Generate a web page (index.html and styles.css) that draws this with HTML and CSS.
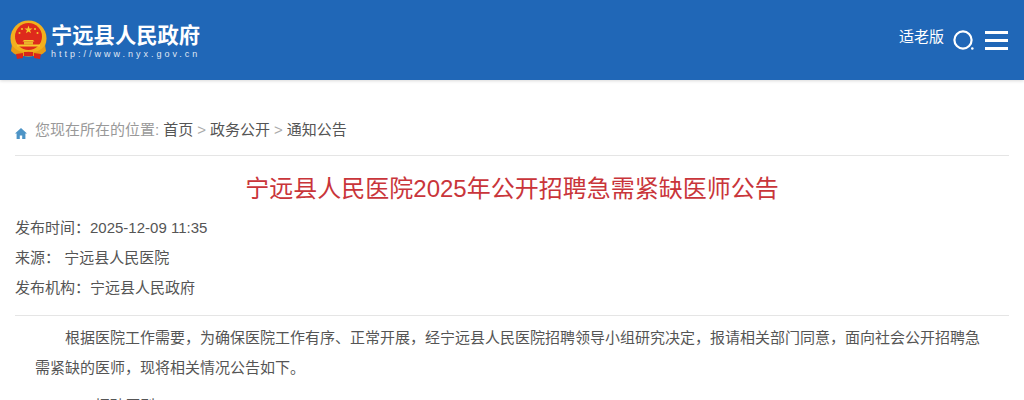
FILE: index.html
```html
<!DOCTYPE html>
<html lang="zh-CN">
<head>
    <meta charset="UTF-8">
    <title>宁远县人民政府</title>
    <link rel="stylesheet" href="styles.css">
</head>
<body>

<div class="header">
    <div class="logo">
        <svg class="emblem" width="38" height="40" viewBox="0 0 38 40">
            <circle cx="18.5" cy="18.5" r="18" fill="#f2b01e"/>
            <circle cx="18.5" cy="16.5" r="13.5" fill="#de2a1c"/>
            <polygon points="18.5,5.5 19.5,8.4 22.6,8.4 20.1,10.2 21,13.2 18.5,11.4 16,13.2 16.9,10.2 14.4,8.4 17.5,8.4" fill="#f6c92c"/>
            <circle cx="12" cy="9" r="1" fill="#f6c92c"/>
            <circle cx="25" cy="9" r="1" fill="#f6c92c"/>
            <circle cx="9.5" cy="13" r="1" fill="#f6c92c"/>
            <circle cx="27.5" cy="13" r="1" fill="#f6c92c"/>
            <polygon points="14,20 23,20 24.5,21.5 12.5,21.5" fill="#f6c92c"/>
            <rect x="14" y="21.5" width="9" height="3" fill="#e8b32a"/>
            <rect x="7" y="24.5" width="23" height="2" fill="#f6c92c"/>
            <path d="M2 25 C7 32 13 33 18.5 31 C24 33 30 32 35 25 L36 31 C30 37 24 37 18.5 35 C13 37 7 37 1 31 Z" fill="#e89c16"/>
            <path d="M6 34 L13 33 L13 38 L7 39 Z M31 34 L24 33 L24 38 L30 39 Z" fill="#d8261a"/>
            <rect x="14" y="32" width="9" height="4" fill="#d8261a"/>
        </svg>
        <div class="logo-text">
            <div class="logo-name">宁远县人民政府</div>
            <div class="logo-url">http://www.nyx.gov.cn</div>
        </div>
    </div>

    <div class="tools">
        <span class="elder">适老版</span>
        <svg class="icon-search" width="22" height="22" viewBox="0 0 22 22">
            <circle cx="10" cy="11" r="8.6" fill="none" stroke="#fff" stroke-width="2.2"/>
            <circle cx="19.3" cy="19.5" r="1.3" fill="#fff"/>
        </svg>
        <div class="icon-menu">
            <span></span>
            <span></span>
            <span></span>
        </div>
    </div>
</div>

<div class="main">
    <div class="crumb">
        <svg class="icon-home" width="12" height="11" viewBox="0 0 12 11">
            <path d="M6 0 L12 5.6 L10.4 5.6 L10.4 11 L7.2 11 L7.2 7.4 L4.8 7.4 L4.8 11 L1.6 11 L1.6 5.6 L0 5.6 Z" fill="#4d94c6"/>
        </svg>
        <span class="crumb-label">您现在所在的位置:</span>
        <a>首页</a>
        <span class="crumb-sep">&gt;</span>
        <a>政务公开</a>
        <span class="crumb-sep">&gt;</span>
        <a>通知公告</a>
    </div>

    <h1 class="title">宁远县人民医院2025年公开招聘急需紧缺医师公告</h1>

    <div class="info">
        <div>发布时间：2025-12-09 11:35</div>
        <div>来源：&nbsp;宁远县人民医院</div>
        <div>发布机构：宁远县人民政府</div>
    </div>

    <div class="content">
        <p>根据医院工作需要，为确保医院工作有序、正常开展，经宁远县人民医院招聘领导小组研究决定，报请相关部门同意，面向社会公开招聘急需紧缺的医师，现将相关情况公告如下。</p>
        <p>一、招聘原则</p>
    </div>
</div>

</body>
</html>
```
FILE: styles.css
```css
html, body {
    margin: 0;
    padding: 0;
}

body {
    background-color: #fff;
    font-family: "Liberation Sans", "Noto Sans CJK SC", sans-serif;
    color: #555;
    overflow: hidden;
}

.header {
    height: 80px;
    background-color: #2067b7;
    box-shadow: 0 1px 3px rgba(0, 0, 0, 0.15);
    display: flex;
    justify-content: space-between;
    align-items: center;
}

.logo {
    display: flex;
    align-items: center;
    padding-left: 10px;
}

.emblem {
    margin-right: 3px;
}

.logo-text {
    color: #fff;
    padding-top: 3px;
}

.logo-name {
    font-size: 21.3px;
    font-weight: bold;
    line-height: 24px;
}

.logo-url {
    font-size: 9px;
    line-height: 12px;
    letter-spacing: 3px;
    opacity: 0.85;
}

.tools {
    display: flex;
    align-items: center;
    padding-right: 16px;
    color: #fff;
}

.elder {
    font-size: 15px;
    margin-right: 10px;
    margin-bottom: 9px;
}

.icon-search {
    margin-right: 10px;
    margin-left: -1px;
}

.icon-menu {
    width: 23px;
    display: flex;
    flex-direction: column;
    gap: 5px;
}

.icon-menu span {
    height: 3px;
    background-color: #fff;
}

.main {
    padding: 40px 15px 0;
}

.crumb {
    display: flex;
    align-items: flex-start;
    padding-bottom: 15px;
    border-bottom: 1px solid #e5e5e5;
    font-size: 15px;
    line-height: 20px;
    color: #555;
}

.crumb .icon-home {
    margin: 8px 8px 0 0;
}

.crumb-label {
    color: #999;
    margin-right: 4px;
}

.crumb-sep {
    color: #aaa;
    margin: 0 4px;
}

.title {
    margin: 0;
    padding-top: 17px;
    text-align: center;
    font-size: 24px;
    line-height: 32px;
    font-weight: normal;
    color: #c9353a;
}

.info {
    margin-top: 8px;
    padding-bottom: 12px;
    border-bottom: 1px solid #e5e5e5;
    font-size: 15px;
    line-height: 30px;
}

.content {
    padding: 7px 25px 0 20px;
    font-size: 15px;
    line-height: 30px;
}

.content p {
    margin: 0 0 8px;
    text-indent: 30px;
}
```
